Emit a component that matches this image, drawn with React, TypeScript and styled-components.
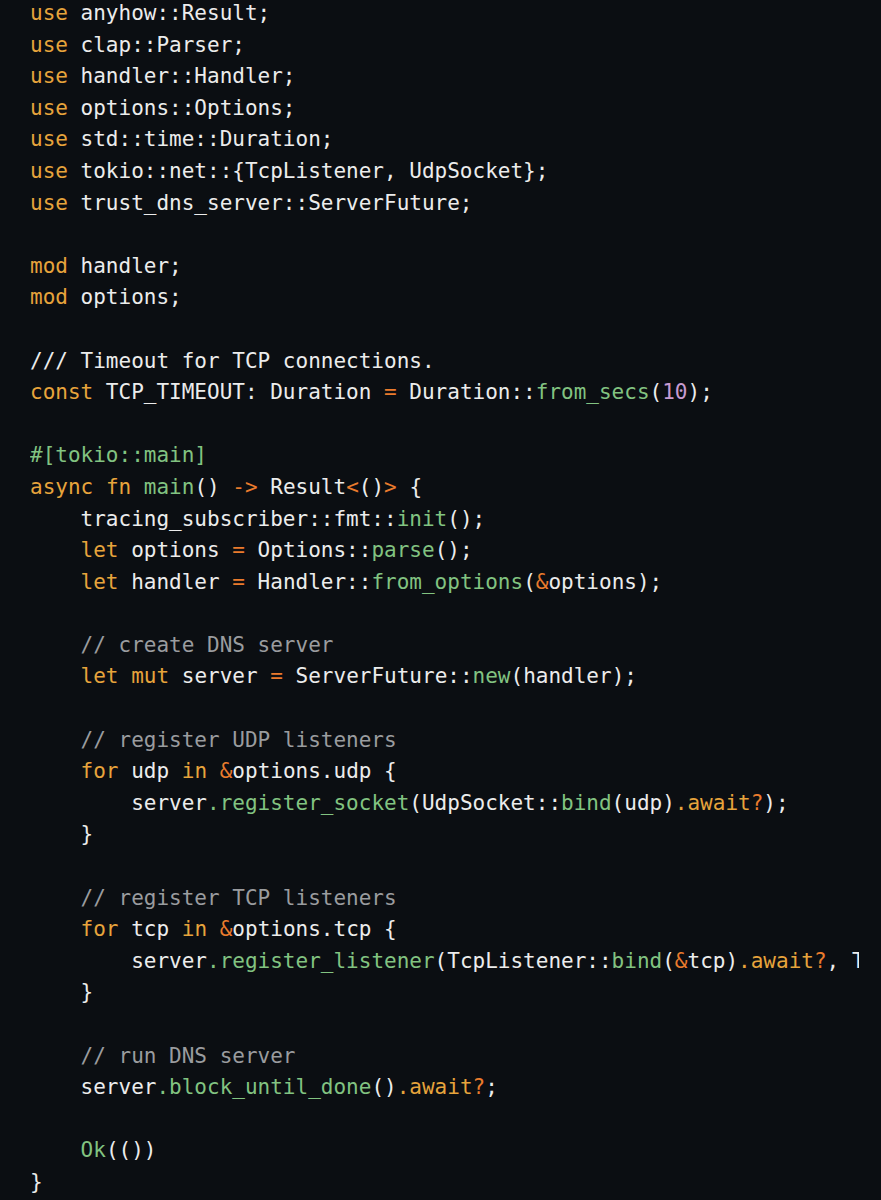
import React from "react";
import styled, { createGlobalStyle } from "styled-components";

const Global = createGlobalStyle`
  html, body { margin: 0; padding: 0; background: #0b0e12; }
  #root { background: #0b0e12; }
`;

type Kind = "kw" | "op" | "fn" | "cm" | "num" | "tx";

const colors: Record<Kind, string> = {
  kw: "#e7a43c",
  op: "#ea7b2d",
  fn: "#82c381",
  cm: "#9a9c9f",
  num: "#c79bd0",
  tx: "#ececec",
};

const Editor = styled.div`
  width: 881px;
  height: 1200px;
  overflow: hidden;
  background: #0b0e12;
  box-sizing: border-box;
  padding: 0 0 0 30px;
`;

const Code = styled.pre`
  width: 829px;
  overflow: hidden;
  margin: -2px 0 0 0;
  font-family: "DejaVu Sans Mono", monospace;
  font-size: 21px;
  line-height: 31.6px;
  color: ${colors.tx};
  white-space: pre;
`;

const Line = styled.div`
  height: 31.6px;
`;

const Tok = styled.span<{ $k: Kind }>`
  color: ${(p) => colors[p.$k]};
`;

type Seg = [Kind, string];
const k = (s: string): Seg => ["kw", s];
const o = (s: string): Seg => ["op", s];
const f = (s: string): Seg => ["fn", s];
const c = (s: string): Seg => ["cm", s];
const n = (s: string): Seg => ["num", s];
const t = (s: string): Seg => ["tx", s];

const lines: Seg[][] = [
  [k("use"), t(" anyhow::Result;")],
  [k("use"), t(" clap::Parser;")],
  [k("use"), t(" handler::Handler;")],
  [k("use"), t(" options::Options;")],
  [k("use"), t(" std::time::Duration;")],
  [k("use"), t(" tokio::net::{TcpListener, UdpSocket};")],
  [k("use"), t(" trust_dns_server::ServerFuture;")],
  [],
  [k("mod"), t(" handler;")],
  [k("mod"), t(" options;")],
  [],
  [t("/// Timeout for TCP connections.")],
  [k("const"), t(" TCP_TIMEOUT: Duration "), o("="), t(" Duration::"), f("from_secs"), t("("), n("10"), t(");")],
  [],
  [f("#[tokio::main]")],
  [k("async"), t(" "), k("fn"), t(" "), f("main"), t("() "), o("->"), t(" Result"), o("<"), t("()"), o(">"), t(" {")],
  [t("    tracing_subscriber::fmt::"), f("init"), t("();")],
  [t("    "), k("let"), t(" options "), o("="), t(" Options::"), f("parse"), t("();")],
  [t("    "), k("let"), t(" handler "), o("="), t(" Handler::"), f("from_options"), t("("), o("&"), t("options);")],
  [],
  [t("    "), c("// create DNS server")],
  [t("    "), k("let"), t(" "), k("mut"), t(" server "), o("="), t(" ServerFuture::"), f("new"), t("(handler);")],
  [],
  [t("    "), c("// register UDP listeners")],
  [t("    "), k("for"), t(" udp "), k("in"), t(" "), o("&"), t("options.udp {")],
  [t("        server"), f(".register_socket"), t("(UdpSocket::"), f("bind"), t("(udp)"), k(".await"), o("?"), t(");")],
  [t("    }")],
  [],
  [t("    "), c("// register TCP listeners")],
  [t("    "), k("for"), t(" tcp "), k("in"), t(" "), o("&"), t("options.tcp {")],
  [t("        server"), f(".register_listener"), t("(TcpListener::"), f("bind"), t("("), o("&"), t("tcp)"), k(".await"), o("?"), t(", TCP_TIMEOUT);")],
  [t("    }")],
  [],
  [t("    "), c("// run DNS server")],
  [t("    server"), f(".block_until_done"), t("()"), k(".await"), o("?"), t(";")],
  [],
  [t("    "), f("Ok"), t("(())")],
  [t("}")],
];

export default function App() {
  return (
    <>
      <Global />
      <Editor>
        <Code>
          {lines.map((segs, i) => (
            <Line key={i}>
              {segs.map(([kind, text], j) => (
                <Tok key={j} $k={kind}>
                  {text}
                </Tok>
              ))}
            </Line>
          ))}
        </Code>
      </Editor>
    </>
  );
}
